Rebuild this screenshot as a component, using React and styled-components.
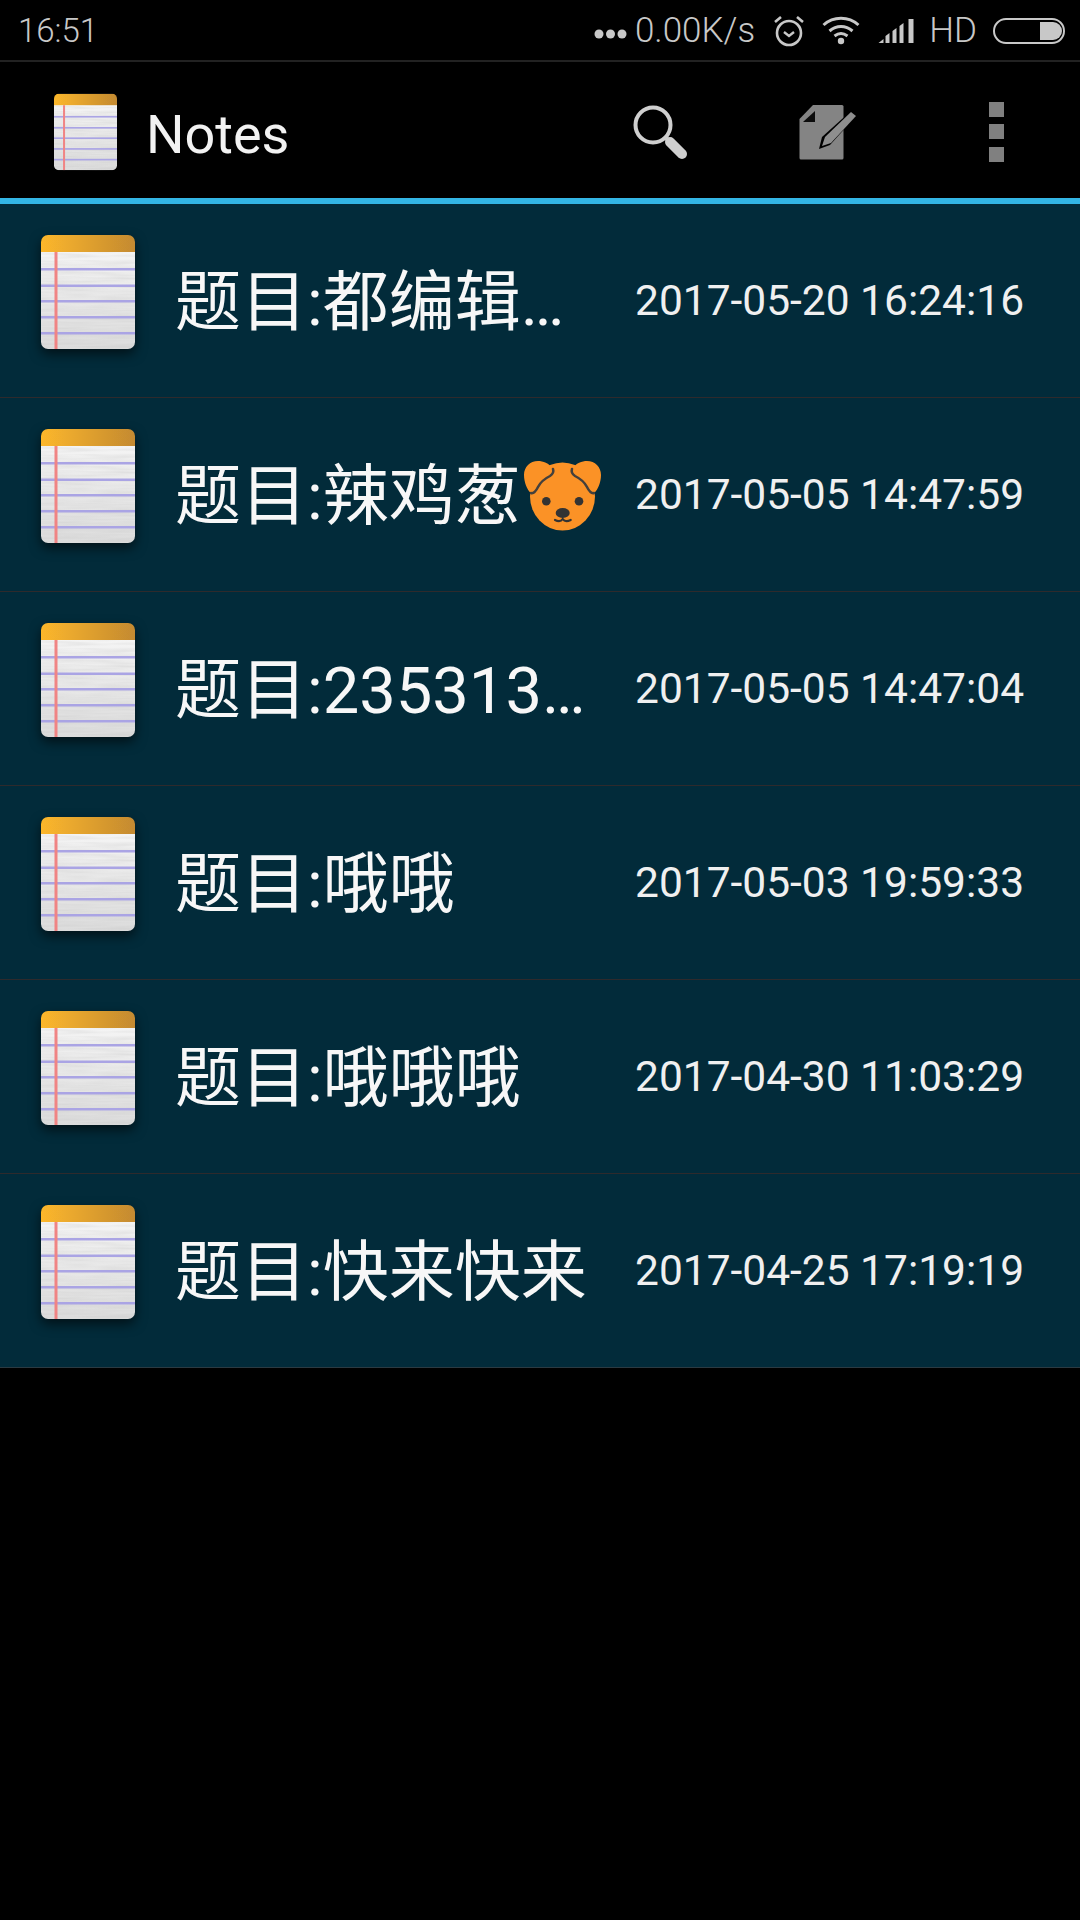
import React from "react";
import styled, { createGlobalStyle } from "styled-components";

const Global = createGlobalStyle`
  html, body { margin: 0; padding: 0; background: #000; }
  body { font-family: Roboto, "Noto Sans CJK SC", sans-serif; }
`;
const Page = styled.div`
  width: 1080px; height: 1920px; background: #000; display: flex; flex-direction: column; overflow: hidden;
`;
const StatusBar = styled.div`
  border-bottom: 2px solid #222; display: flex; align-items: center; padding: 2px 15px 0 18px;
  color: #c8c8c8; font-size: 33px; line-height: 58px; flex: none; height: 58px;
`;
const Clock = styled.span`flex: 1; font-size: 33px; font-weight: 300;`;
const Dots = styled.svg`width: 33px; height: 10px; margin-right: 8px; margin-top: 6px; display: block;`;
const StatusIcon = styled.svg`display: block; flex: none; margin-left: ${p => p.$ml || 0}px;`;
const Speed = styled.span`white-space: nowrap; font-weight: 300; font-size: 35px;`;
const Hd = styled.span`margin-left: 14px; font-size: 35px; font-weight: 300;`;
const ActionBar = styled.header`
  height: 136px; display: flex; align-items: center; padding: 0 0 0 54px; flex: none;
  border-bottom: 6px solid #33b5e5;
`;
const AppIcon = styled.div`width: 63px; height: 78px; flex: none; margin-top: 4px;`;
const AppTitle = styled.h1`
  flex: 1; margin: 10px 0 0 29px; font-size: 54px; font-weight: 400; color: #f2f2f2; line-height: 60px;
`;
const ActionButton = styled.div`
  width: 168px; height: 136px; display: flex; align-items: center; justify-content: center; margin-top: 4px;
`;
const List = styled.ul`list-style: none; margin: 0; padding: 0; background: #022b3a; flex: none;`;
const Row = styled.li`
  height: 193px; border-bottom: 1px solid ${p => p.$last ? "#2b3a42" : "#2e2a2c"};
  display: flex; align-items: center; padding-left: 41px;
`;
const RowIcon = styled.div`width: 94px; height: 114px; flex: none; margin-top: -18px; filter: drop-shadow(0 5px 6px rgba(0,0,0,.6));`;
const Title = styled.div`
  width: 460px; margin: -3px 0 0 40px; font-size: 66px; line-height: 80px; color: #f7f7f7; white-space: nowrap;
  flex: none; display: flex; align-items: baseline; font-family: "Noto Sans CJK SC", Roboto, sans-serif;
`;
const TitleAscii = styled.span`font-family: Roboto, sans-serif; font-size: 65px;`;
const DateText = styled.div`font-size: 42.5px; color: #f0f0f0; white-space: nowrap;`;
const DogWrap = styled.svg`display: block; flex: none; align-self: center; margin: 5px 0 0 3px;`;

const NoteIcon = ({ id }) => (
  <svg viewBox="0 0 94 114" width="100%" height="100%" style={{ display: "block" }}>
    <defs>
      <linearGradient id={id + "h"} x1="0" x2="1" y1="0" y2="0">
        <stop offset="0" stopColor="#fcb72c" />
        <stop offset="1" stopColor="#c48a30" />
      </linearGradient>
      <linearGradient id={id + "p"} x1="0" x2="0" y1="0" y2="1">
        <stop offset="0" stopColor="#f8f8f8" />
        <stop offset="1" stopColor="#dcdcdc" />
      </linearGradient>
      <filter id={id + "s"} x="-5%" y="-5%" width="110%" height="110%"><feGaussianBlur stdDeviation="0.6" /></filter>
      <filter id={id + "n"} x="0" y="0" width="100%" height="100%">
        <feTurbulence type="fractalNoise" baseFrequency="0.02 0.35" numOctaves="2" seed="4" />
        <feColorMatrix values="0 0 0 0 0.5  0 0 0 0 0.5  0 0 0 0 0.5  0.5 0 0 0 -0.17" />
      </filter>
      <clipPath id={id + "c"}><rect width="94" height="114" rx="7" /></clipPath>
    </defs>
    <g clipPath={`url(#${id}c)`} filter={`url(#${id}s)`}>
      <rect width="94" height="114" fill={`url(#${id}p)`} />
      <rect y="17" width="94" height="97" filter={`url(#${id}n)`} />
      <rect width="94" height="17" fill={`url(#${id}h)`} />
      {[33, 49.500, 65, 81, 97].map(y => <rect key={y} x="0" y={y} width="94" height="2.500" fill="#aaa4e4" />)}
      <rect x="13.500" y="17" width="3" height="97" fill="#f08484" />
    </g>
  </svg>
);

const Dog = () => (
  <DogWrap width="77" height="70" viewBox="0 0 77 70">
    <ellipse cx="38.500" cy="35.500" rx="32.500" ry="34" fill="#fb9226" />
    <path d="M29 8C25 2 19 0 14 0 6 0 0 6 0 14c0 7 3 15 7 18 3 1 5-2 7-6 3-6 8-9 12-11 3-2 4-4 3-7z" fill="#fb9226" />
    <path d="M48 8C52 2 58 0 63 0c8 0 14 6 14 14 0 7-3 15-7 18-3 1-5-2-7-6-3-6-8-9-12-11-3-2-4-4-3-7z" fill="#fb9226" />
    <path d="M29 8c1 3 0 5-3 7-4 2-9 5-12 11-2 4-4 7-7 6M48 8c-1 3 0 5 3 7 4 2 9 5 12 11 2 4 4 7 7 6" fill="none" stroke="#44403c" strokeWidth="2.500" strokeLinecap="round" />
    <circle cx="22.300" cy="40.300" r="4.300" fill="#333" />
    <circle cx="55" cy="40.300" r="4.300" fill="#333" />
    <ellipse cx="38.700" cy="52" rx="7" ry="5" fill="#333" />
    <path d="M31 59c3 1.500 6 1.500 7.700-1 1.700 2.500 5 2.500 8 1" fill="none" stroke="#333" strokeWidth="2.200" strokeLinecap="round" />
  </DogWrap>
);

const rows = [
  { rest: "都编辑", dots: true, date: "2017-05-20 16:24:16" },
  { rest: "辣鸡葱", dog: true, date: "2017-05-05 14:47:59" },
  { ascii: "235313", dots: true, date: "2017-05-05 14:47:04" },
  { rest: "哦哦", date: "2017-05-03 19:59:33" },
  { rest: "哦哦哦", date: "2017-04-30 11:03:29" },
  { rest: "快来快来", date: "2017-04-25 17:19:19" },
];

export default function App() {
  return (
    <Page>
      <Global />
      <StatusBar>
        <Clock>16:51</Clock>
        <Dots viewBox="0 0 33 10"><g fill="#c8c8c8"><circle cx="5" cy="5" r="4.500" /><circle cx="16.500" cy="5" r="4.500" /><circle cx="28" cy="5" r="4.500" /></g></Dots>
        <Speed>0.00K/s</Speed>
        <StatusIcon $ml={18} width="32" height="32" viewBox="0 0 32 32" fill="none" stroke="#c8c8c8">
          <circle cx="16" cy="18" r="12" strokeWidth="2.600" />
          <path d="M11 17l5 4 5-4" strokeWidth="2.400" />
          <path d="M2 7l6-5M30 7l-6-5" strokeWidth="2.600" />
        </StatusIcon>
        <StatusIcon $ml={17} width="38" height="30" viewBox="0 0 37 30" fill="none" stroke="#c8c8c8" strokeWidth="3">
          <path d="M1 9c10-9 25-9 35 0M7 15c7-6 16-6 23 0M12 20c4-3 9-3 13 0" />
          <circle cx="18.500" cy="25" r="3.200" fill="#c8c8c8" stroke="none" />
        </StatusIcon>
        <StatusIcon $ml={18} width="37" height="26" viewBox="0 0 36 26" fill="#c8c8c8">
          <path d="M0 25l5-4v4zM7 18l4-3v10H7zM14 13l4-3v15h-4zM21 8l4-3v20h-4zM30 1h5v24h-5z" />
        </StatusIcon>
        <Hd>HD</Hd>
        <StatusIcon $ml={16} width="72" height="26" viewBox="0 0 72 26" fill="none">
          <rect x="1" y="1" width="70" height="24" rx="12" stroke="#c8c8c8" strokeWidth="2" />
          <path d="M47 4h13a9 9 0 010 18H47z" fill="#c8c8c8" />
        </StatusIcon>
      </StatusBar>
      <ActionBar>
        <AppIcon><NoteIcon id="a" /></AppIcon>
        <AppTitle>Notes</AppTitle>
        <ActionButton>
          <svg width="54" height="55" viewBox="0 0 54 55" fill="none">
            <circle cx="20" cy="20" r="17.500" stroke="#cfcfcf" strokeWidth="4" />
            <path d="M33 33l4 4" stroke="#cfcfcf" strokeWidth="4" />
            <path d="M37 37l12 12" stroke="#cfcfcf" strokeWidth="10" strokeLinecap="round" />
          </svg>
        </ActionButton>
        <ActionButton>
          <svg width="59" height="56" viewBox="0 0 59 56">
            <path d="M14 1h29a1.500 1.500 0 011.500 1.500V54a1.500 1.500 0 01-1.500 1.500H2A1.500 1.500 0 01.5 54V15z" fill="#848484" />
            <path d="M16 7v11H4z" fill="#0c0c0c" />
            <path d="M53 6l5 5-27 30-11 4 3-12z" fill="#000" />
            <path d="M52 8l5 4-25 27-9 3 3-9z" fill="#8e8e8e" />
          </svg>
        </ActionButton>
        <ActionButton>
          <svg width="15" height="60" viewBox="0 0 15 60" fill="#808080">
            <rect width="15" height="15" /><rect y="22" width="15" height="15" /><rect y="45" width="15" height="15" />
          </svg>
        </ActionButton>
      </ActionBar>
      <List>
        {rows.map((r, i) => (
          <Row key={r.date} $last={i === rows.length - 1}>
            <RowIcon><NoteIcon id={"r" + i} /></RowIcon>
            <Title>
              题目<TitleAscii>:</TitleAscii>
              {r.ascii ? <TitleAscii>{r.ascii}</TitleAscii> : r.rest}
              {r.dots && <TitleAscii>…</TitleAscii>}
              {r.dog && <Dog />}
            </Title>
            <DateText>{r.date}</DateText>
          </Row>
        ))}
      </List>
    </Page>
  );
}
